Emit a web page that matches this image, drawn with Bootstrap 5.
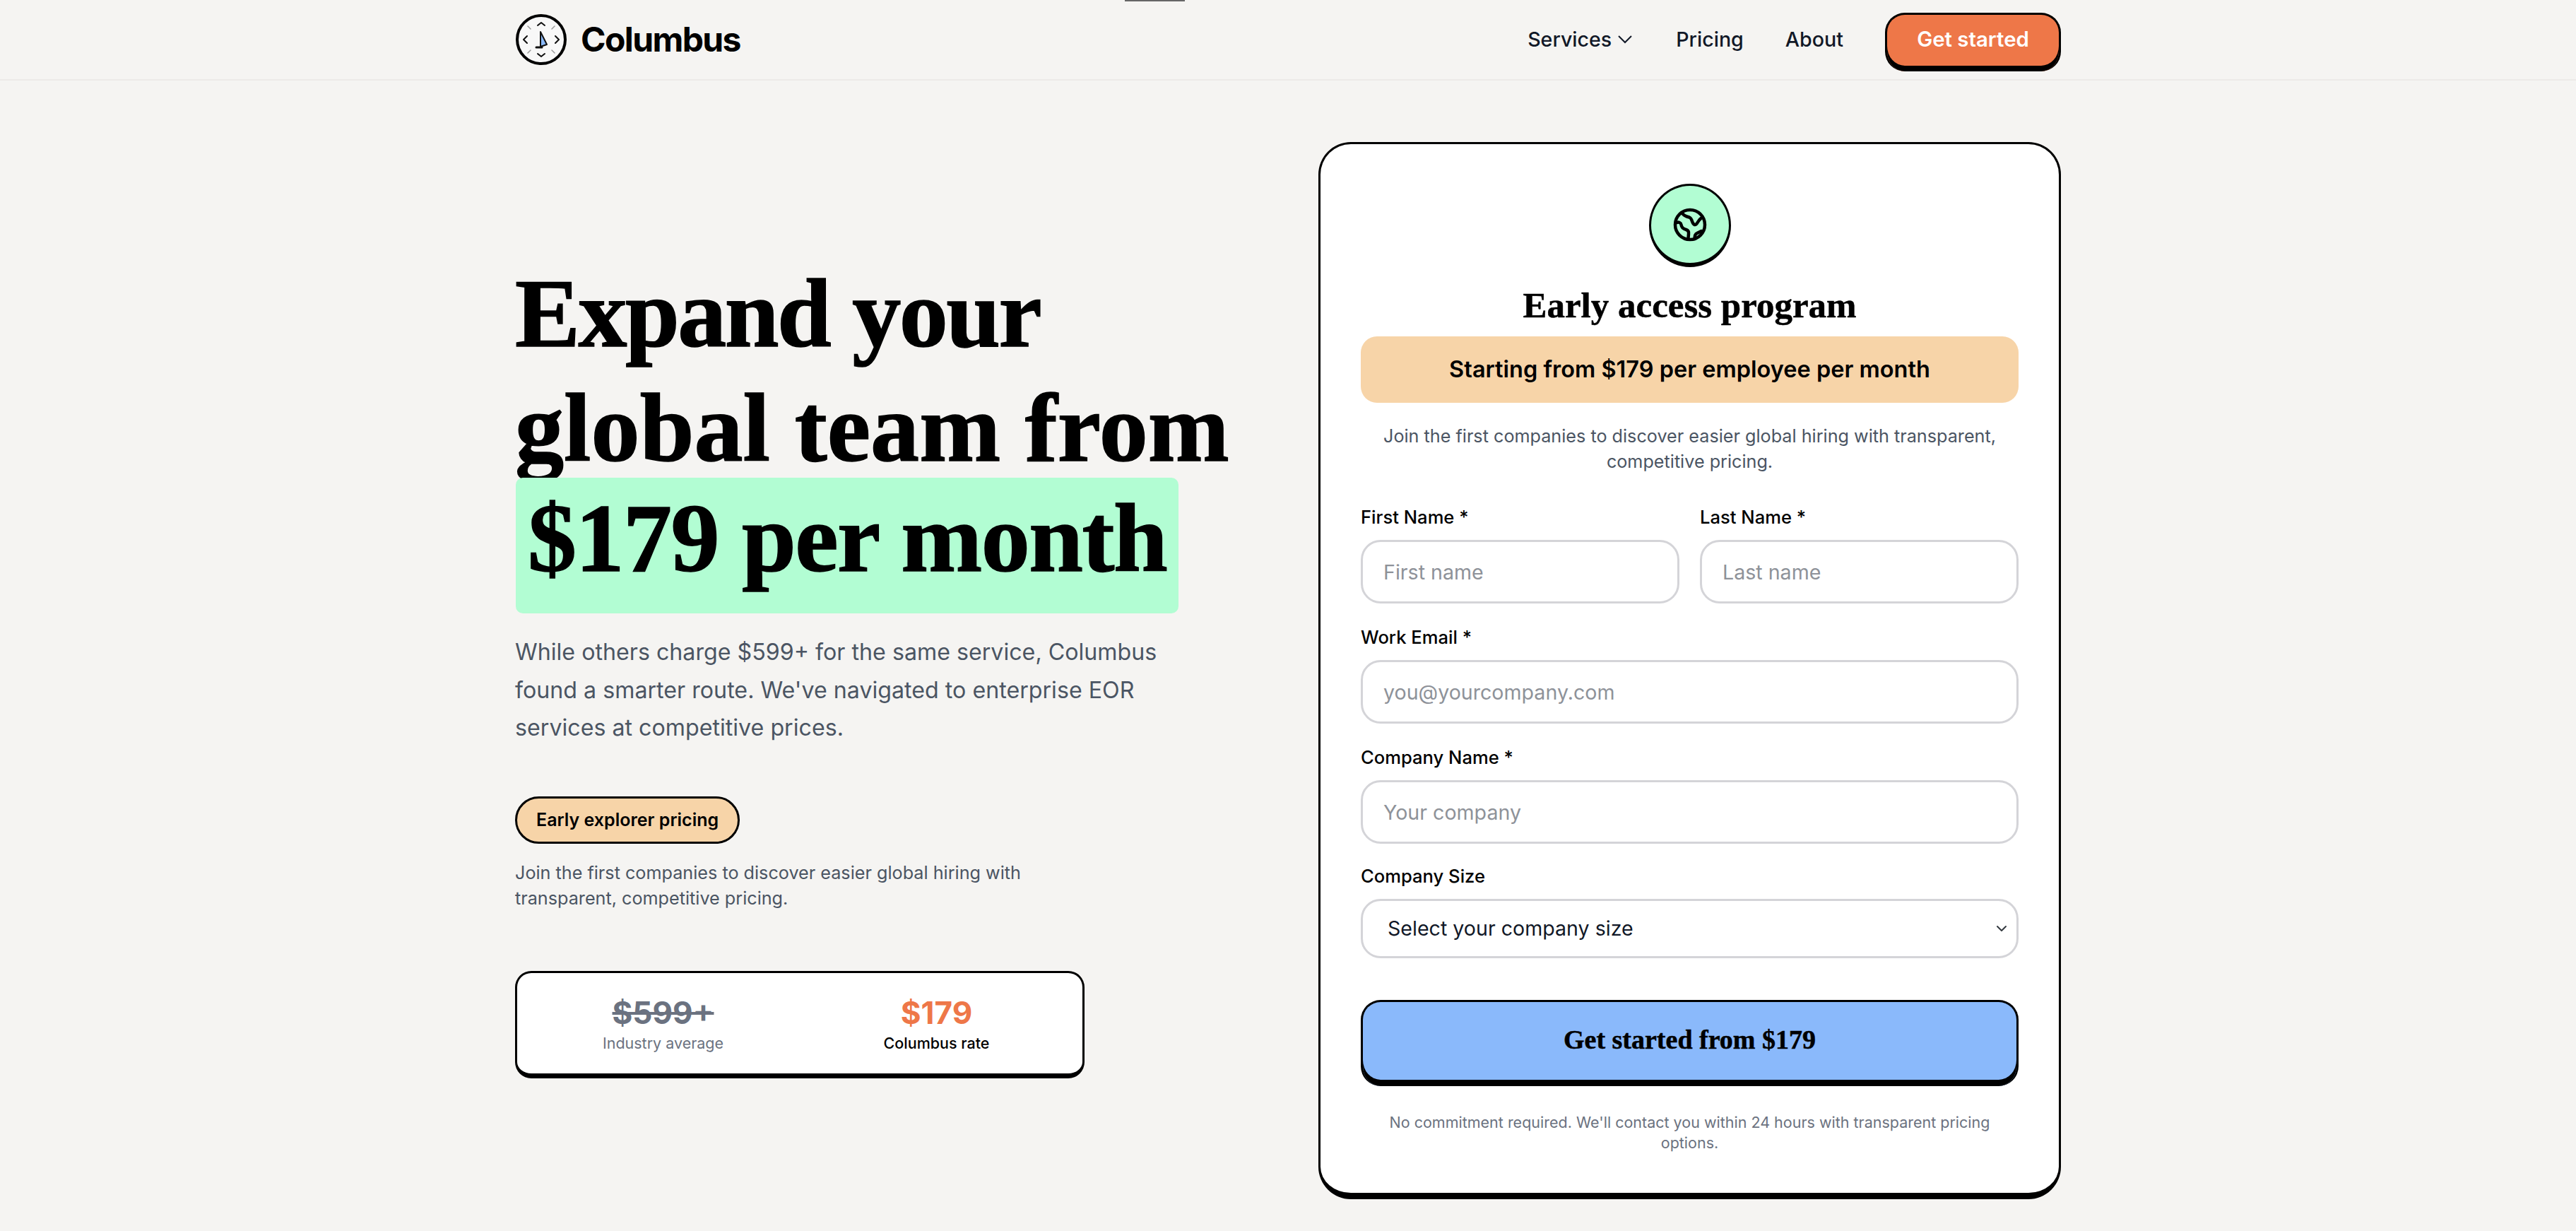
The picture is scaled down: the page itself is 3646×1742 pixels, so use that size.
<!DOCTYPE html>
<html lang="en">

<head>
    <meta charset="UTF-8">
    <title>Columbus</title>
    <link href="https://cdn.jsdelivr.net/npm/bootstrap@5.3.2/dist/css/bootstrap.min.css" rel="stylesheet">
    <style>
        body {
            background: #f5f4f2;
            font-family: 'Inter', sans-serif;
            color: #000;
        }

        .page-wrap {
            width: 2188px;
            margin: 0 auto;
        }

        .pt-main {
            padding-top: 87px;
        }

        .top-tick {
            position: absolute;
            top: 0;
            left: 1592px;
            width: 85px;
            height: 2px;
            background: #666;
        }

        .top-bar {
            height: 114px;
            border-bottom: 2px solid #eceae8;
        }

        .brand-name {
            gap: 19px;
            font-size: 48px;
            font-weight: 700;
            letter-spacing: -1.6px;
            color: #000;
            text-decoration: none;
        }

        .top-link {
            font-size: 28.6px;
            font-weight: 500;
            color: #111827;
            text-decoration: none;
        }

        .link-gap {
            margin-left: 59px;
        }

        .link-gap-first {
            margin-left: 61px;
        }

        .btn-start {
            width: 249px;
            height: 83px;
            margin: 6px 0 0 59px;
            padding: 0 0 8px;
            font-size: 29.4px;
            font-weight: 600;
            color: #fff;
            background: #ee7748;
            border: 3px solid #000;
            border-bottom-width: 0;
            border-radius: 28px;
            box-shadow: inset 0 -8px 0 #000;
        }

        .hero-side {
            width: 1050px;
            margin-bottom: 9px;
        }

        .hero-title {
            font-family: 'Liberation Serif', serif;
            font-weight: 700;
            font-size: 138px;
            line-height: 162px;
            letter-spacing: -2.5px;
            -webkit-text-stroke: 1.5px #000;
            white-space: nowrap;
            margin: 0;
        }

        .hero-wide {
            letter-spacing: 0.1px;
        }

        .hero-mark {
            display: inline-block;
            height: 192px;
            line-height: 172px;
            padding: 0 17px;
            letter-spacing: -1.5px;
            background: #b2fdd3;
            border-radius: 10px;
            vertical-align: top;
            margin: -11px 0 0 1px;
        }

        .hero-text {
            width: 930px;
            font-size: 32.2px;
            line-height: 53.5px;
            color: #4b5563;
            margin: 28px 0 0;
        }

        .pill-tag {
            display: inline-block;
            height: 67px;
            line-height: 61px;
            margin-top: 70px;
            padding: 0 27px;
            font-size: 25px;
            font-weight: 600;
            background: #f7d4a8;
            border: 3px solid #000;
            border-radius: 34px;
        }

        .pill-note {
            width: 760px;
            font-size: 25.2px;
            line-height: 36px;
            color: #4b5563;
            margin: 23px 0 0;
        }

        .rate-box {
            width: 806px;
            height: 152px;
            margin-top: 85px;
            background: #fff;
            border: 3px solid #000;
            border-bottom-width: 7px;
            border-radius: 23px;
        }

        .rate-col {
            width: 387px;
        }

        .rate-val {
            font-size: 44px;
            line-height: 56px;
            font-weight: 700;
        }

        .rate-old {
            color: #6b7280;
        }

        .rate-new {
            color: #ee7748;
        }

        .rate-lbl {
            font-size: 21.5px;
            line-height: 30px;
        }

        .form-panel {
            width: 1051px;
            height: 1496px;
            padding: 56px 57px 0;
            background: #fff;
            border: 3px solid #000;
            border-bottom-width: 9px;
            border-radius: 46px;
        }

        .globe-badge {
            width: 116px;
            height: 118px;
            margin: 0 auto;
            background: #b2fdd3;
            border: 3px solid #000;
            border-bottom-width: 6px;
            border-radius: 50%;
        }

        .panel-title {
            font-family: 'Liberation Serif', serif;
            font-weight: 700;
            font-size: 51px;
            line-height: 60px;
            -webkit-text-stroke: 0.5px #000;
            margin: 24px 0 0;
        }

        .offer-bar {
            height: 94px;
            line-height: 94px;
            margin-top: 14px;
            font-size: 32.5px;
            font-weight: 600;
            background: #f7d4a8;
            border-radius: 23px;
        }

        .panel-text {
            font-size: 25.2px;
            line-height: 36px;
            color: #4b5563;
            margin: 29px 0 0;
        }

        .fld-label {
            display: block;
            font-size: 25.6px;
            line-height: 36px;
            font-weight: 500;
            margin-bottom: 14px;
        }

        .fld-row {
            margin-top: 43px;
        }

        .fld-half {
            width: 451px;
        }

        .fld-wrap {
            margin-top: 30px;
        }

        .fld-wrap-last {
            margin-top: 28px;
        }

        .form-control.fld-input,
        .form-select.fld-input {
            height: 90px;
            padding: 0 29px;
            font-size: 28.6px;
            color: #111827;
            border: 3px solid #d4d4d8;
            border-radius: 28px;
            box-shadow: none;
        }

        .form-control.fld-input::placeholder {
            color: #8e9299;
        }

        .form-select.fld-input {
            height: 84px;
            padding-left: 35px;
            background-position: right 11px center;
            background-size: 20px 16px;
        }

        .btn-main {
            display: block;
            width: 100%;
            height: 122px;
            margin-top: 59px;
            padding: 0 0 12px;
            font-family: 'Liberation Serif', serif;
            font-weight: 700;
            font-size: 38px;
            -webkit-text-stroke: 0.5px #000;
            color: #000;
            background: #8ab9fb;
            border: 3px solid #000;
            border-bottom-width: 0;
            border-radius: 28px;
            box-shadow: inset 0 -9px 0 #000;
        }

        .panel-foot {
            font-size: 21.5px;
            line-height: 29px;
            color: #6b7280;
            margin: 37px 0 0;
            padding: 0 10px;
        }
    </style>
</head>

<body>
    <div class="top-tick"></div>

    <div class="top-bar">
        <nav class="page-wrap h-100 d-flex align-items-center justify-content-between">
            <a href="#" class="brand-name d-flex align-items-center">
                <svg width="74" height="74" viewBox="0 0 74 74" fill="none" stroke="#111" stroke-width="2" stroke-linecap="round" stroke-linejoin="round">
                    <circle cx="37" cy="37" r="34" fill="#f8f8f8" stroke="#000" stroke-width="4" />
                    <path d="M32 17l5-4 5 4M32 57l5 4 5-4M17 32l-5 5 5 5M57 32l5 5-5 5" />
                    <path d="M18 18l4 4M56 18l-4 4M18 56l4-4M56 56l-4-4" stroke="#999" stroke-width="1.5" />
                    <path d="M36 26l9 18-9 3z" fill="#8ab9fb" />
                    <path d="M30 48h8" stroke-width="3" />
                </svg>
                Columbus
            </a>
            <div class="d-flex align-items-center">
                <a href="#" class="top-link d-flex align-items-center gap-2">Services
                    <svg width="22" height="13" viewBox="0 0 22 13" fill="none" stroke="#111827" stroke-width="2"><path d="M2 2l9 9 9-9" /></svg>
                </a>
                <a href="#" class="top-link link-gap-first">Pricing</a>
                <a href="#" class="top-link link-gap">About</a>
                <button class="btn btn-start">Get started</button>
            </div>
        </nav>
    </div>

    <main class="page-wrap d-flex align-items-center justify-content-between pt-main">
        <section class="hero-side">
            <h1 class="hero-title">Expand your<br><span class="hero-wide">global team from</span><br><span class="hero-mark">$179 per month</span></h1>
            <p class="hero-text">While others charge $599+ for the same service, Columbus found a smarter route. We've navigated to enterprise EOR services at competitive prices.</p>
            <span class="pill-tag">Early explorer pricing</span>
            <p class="pill-note">Join the first companies to discover easier global hiring with transparent, competitive pricing.</p>
            <div class="rate-box d-flex justify-content-center align-items-center text-center">
                <div class="rate-col">
                    <div class="rate-val rate-old text-decoration-line-through">$599+</div>
                    <div class="rate-lbl rate-old">Industry average</div>
                </div>
                <div class="rate-col">
                    <div class="rate-val rate-new">$179</div>
                    <div class="rate-lbl fw-medium">Columbus rate</div>
                </div>
            </div>
        </section>

        <section class="form-panel">
            <div class="globe-badge d-flex align-items-center justify-content-center">
                <svg width="50" height="50" viewBox="0 0 50 50" fill="none" stroke="#000" stroke-width="4.5" stroke-linecap="round" stroke-linejoin="round">
                    <circle cx="25" cy="25" r="21" />
                    <path d="M14 8.5c2 4 6 5 10 6 5 2 3 9 7.5 10.5 4 1 4-6 9-9" />
                    <path d="M6 22c3-1 6 0 6.5 3 .5 4 3 6 7 7 3 1 4 3 3.5 6l-.5 6" />
                    <path d="M31.5 45c0-4 1-7 3.5-8 2-1 4-2 6-3" />
                </svg>
            </div>
            <h2 class="panel-title text-center">Early access program</h2>
            <div class="offer-bar text-center">Starting from $179 per employee per month</div>
            <p class="panel-text text-center">Join the first companies to discover easier global hiring with transparent, competitive pricing.</p>

            <form>
                <div class="row fld-row gx-0 justify-content-between">
                    <div class="fld-half">
                        <label class="fld-label">First Name *</label>
                        <input type="text" class="form-control fld-input" placeholder="First name">
                    </div>
                    <div class="fld-half">
                        <label class="fld-label">Last Name *</label>
                        <input type="text" class="form-control fld-input" placeholder="Last name">
                    </div>
                </div>
                <div class="fld-wrap">
                    <label class="fld-label">Work Email *</label>
                    <input type="email" class="form-control fld-input" placeholder="you@yourcompany.com">
                </div>
                <div class="fld-wrap">
                    <label class="fld-label">Company Name *</label>
                    <input type="text" class="form-control fld-input" placeholder="Your company">
                </div>
                <div class="fld-wrap-last">
                    <label class="fld-label">Company Size</label>
                    <select class="form-select fld-input">
                        <option>Select your company size</option>
                    </select>
                </div>
                <button type="button" class="btn-main">Get started from $179</button>
            </form>
            <p class="panel-foot text-center">No commitment required. We'll contact you within 24 hours with transparent pricing options.</p>
        </section>
    </main>

    <script src="https://cdn.jsdelivr.net/npm/bootstrap@5.3.2/dist/js/bootstrap.bundle.min.js"></script>
</body>

</html>
